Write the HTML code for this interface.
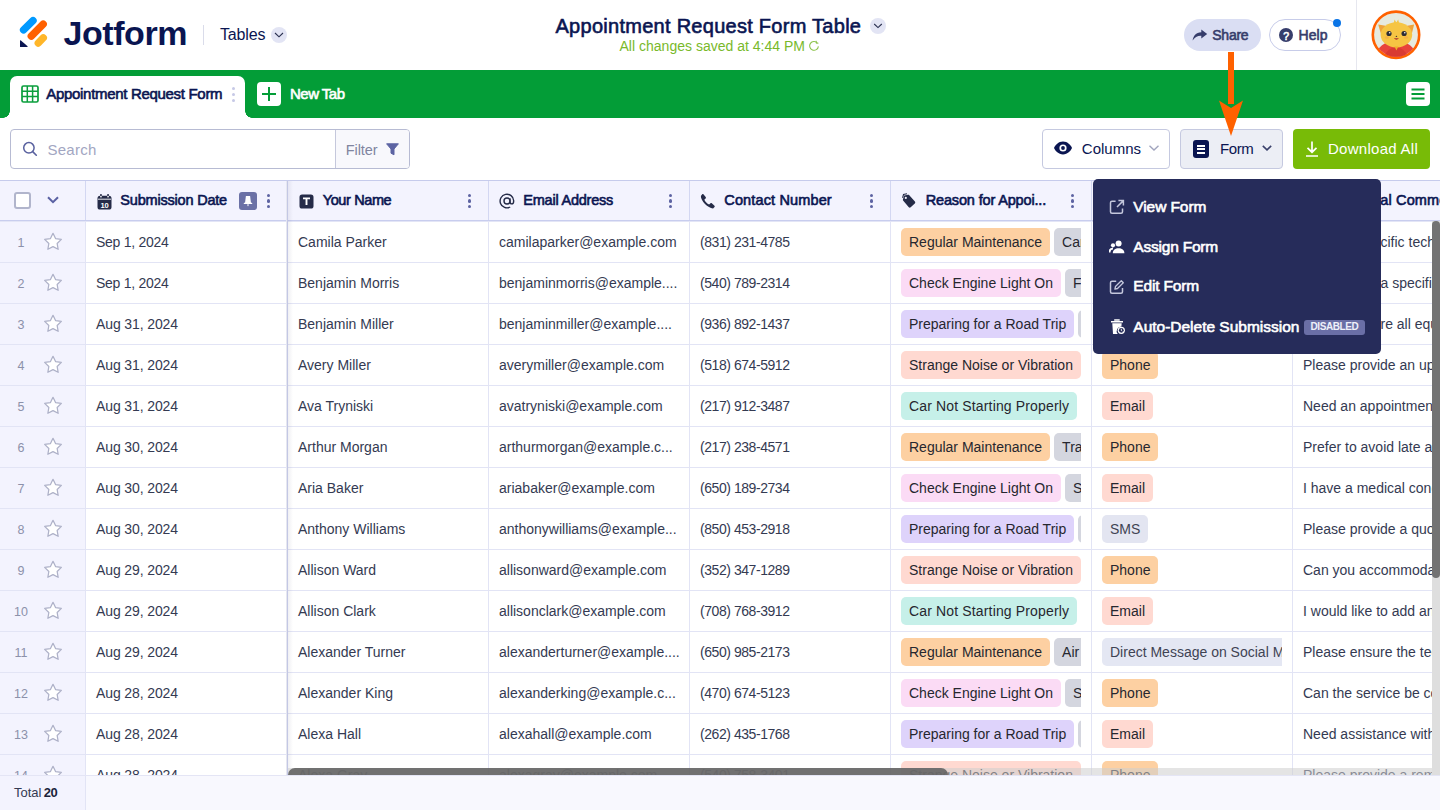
<!DOCTYPE html>
<html><head><meta charset="utf-8"><style>
*{box-sizing:border-box;margin:0;padding:0}
html,body{width:1440px;height:810px;overflow:hidden;background:#fff;font-family:"Liberation Sans",sans-serif;color:#0a1551}
body{position:relative}
.abs{position:absolute}
.t{position:absolute;line-height:0;white-space:nowrap}
.pills{position:absolute;height:28px;overflow:hidden;white-space:nowrap;display:flex;gap:4px}
.pill{display:block;height:28px;line-height:28px;padding:0 8px;border-radius:5px;font-size:14px;color:#26272f;flex:none}
.rm{background:#fdd0a2} .ce{background:#fbdbf5} .pr{background:#ded3fb} .sn{background:#ffd9d1} .cn{background:#c6f0e9} .g{background:#d4d6df}
.ph{background:#fdd0a2} .em{background:#ffd9d1} .sms{background:#e3e5f1;color:#3f4353} .dm{background:#e4e7f3;color:#3f4353}
</style></head><body>
<div class="abs" style="left:0;top:0;width:1440px;height:70px;background:#fff"></div>
<svg class="abs" style="left:0;top:0" width="60" height="60" viewBox="0 0 60 60">
<line x1="23.6" y1="29.8" x2="33.0" y2="20.6" stroke="#0099ff" stroke-width="7.4" stroke-linecap="round"/>
<line x1="31.3" y1="36.2" x2="43.2" y2="24.1" stroke="#ff6100" stroke-width="7.4" stroke-linecap="round"/>
<line x1="38.3" y1="43.0" x2="43.3" y2="37.8" stroke="#ffb629" stroke-width="7.4" stroke-linecap="round"/>
<path d="M20.6 40.2 L27.6 46.2 Q28 47 27 47 H20.6 Q20 47 20 46.4 V40.8 Q20 40 20.6 40.2Z" fill="#0a1551"/>
</svg>
<div class="t" style="left:63.5px;top:33.22px;font-size:34.0px;font-weight:700;color:#0a1551;letter-spacing:-0.427px;">Jotform</div>
<div class="abs" style="left:203px;top:25px;width:1px;height:20px;background:#dadcea"></div>
<div class="t" style="left:220.0px;top:35.36px;font-size:16.0px;font-weight:400;color:#0a1551;letter-spacing:-0.150px;">Tables</div>
<div class="abs" style="left:271px;top:27px;width:16px;height:16px;border-radius:50%;background:#e2e4f4"></div>
<svg class="abs" style="left:274px;top:31px" width="10" height="8" viewBox="0 0 10 8"><path d="M1 2l4 3.8 4-3.8" fill="none" stroke="#2a3050" stroke-width="1.1"/></svg>
<div class="t" style="left:555.5px;top:25.87px;font-size:20.0px;font-weight:400;-webkit-text-stroke:0.6px #0a1551;color:#0a1551;letter-spacing:0.273px;">Appointment Request Form Table</div>
<div class="abs" style="left:869.5px;top:18px;width:16px;height:16px;border-radius:50%;background:#e2e4f4"></div>
<svg class="abs" style="left:872.5px;top:22px" width="10" height="8" viewBox="0 0 10 8"><path d="M1.2 2l3.8 3.6 3.8-3.6" fill="none" stroke="#2a3050" stroke-width="1.1"/></svg>
<div class="t" style="left:619.5px;top:46.05px;font-size:14.0px;font-weight:400;color:#79b92b;letter-spacing:0.010px;">All changes saved at 4:44 PM</div>
<svg class="abs" style="left:807px;top:39px" width="14" height="14" viewBox="0 0 14 14"><path d="M10.3 3.9A4.4 4.4 0 1 0 11.4 7.4" fill="none" stroke="#8cc24a" stroke-width="1.1"/><path d="M9.2 1.8v2.4h2.2" fill="none" stroke="#8cc24a" stroke-width="1"/></svg>
<div class="abs" style="left:1184px;top:19px;width:77px;height:32px;border-radius:16px;background:#dadef3"></div>
<svg class="abs" style="left:1192px;top:29px" width="16" height="12" viewBox="0 0 16 12"><path d="M9.3 0.4L15.2 5 9.3 9.4V6.7C5.3 6.6 2.700 8 0.600 11.600 1.200 7 3.800 3.600 9.300 3.200z" fill="#363d6b"/></svg>
<div class="t" style="left:1212.3px;top:34.75px;font-size:14.0px;font-weight:400;-webkit-text-stroke:0.6px #363d6b;color:#363d6b;letter-spacing:-0.265px;">Share</div>
<div class="abs" style="left:1269px;top:19px;width:72px;height:32px;border-radius:16px;border:1px solid #c7cce9;background:#fff"></div>
<div class="abs" style="left:1278.8px;top:27.8px;width:14.5px;height:14.5px;border-radius:50%;background:#363d6b"></div>
<div class="t" style="left:1283.2px;top:35.56px;font-size:10.5px;font-weight:400;-webkit-text-stroke:0.6px #fff;color:#fff;">?</div>
<div class="t" style="left:1298.5px;top:34.75px;font-size:14.0px;font-weight:400;-webkit-text-stroke:0.6px #363d6b;color:#363d6b;letter-spacing:0.068px;">Help</div>
<div class="abs" style="left:1333px;top:18.8px;width:8px;height:8px;border-radius:50%;background:#0a74e6"></div>
<div class="abs" style="left:1356px;top:0;width:1px;height:70px;background:#e6e7ef"></div>
<svg class="abs" style="left:1370px;top:9px" width="52" height="52" viewBox="0 0 52 52">
<defs><clipPath id="av"><circle cx="26" cy="25.8" r="22"/></clipPath></defs>
<circle cx="26" cy="25.8" r="23.2" fill="#e7eadf" stroke="#ff6100" stroke-width="2.6"/>
<g clip-path="url(#av)">
<path d="M5 52 Q6 33 26 31.5 Q46 33 47 52z" fill="#e8443b"/>
<path d="M14 52 Q14 40 26 38 Q38 40 38 52z" fill="#d93a32"/>
<path d="M8.2 15.6 L17 17 L11 25z" fill="#eea33a"/><path d="M44.1 15.6 L35.8 17 L41.8 25z" fill="#eea33a"/>
<ellipse cx="26.4" cy="25.8" rx="15.8" ry="12.6" fill="#f6c543"/>
<path d="M23.5 15 L24.6 10.6 L26.3 13.6 L28.2 10.6 L29.3 15z" fill="#f6c543"/>
<ellipse cx="17" cy="28.5" rx="2.2" ry="1.2" fill="#f3a94a" opacity=".7"/><ellipse cx="36" cy="28.5" rx="2.2" ry="1.2" fill="#f3a94a" opacity=".7"/>
<circle cx="19" cy="24.5" r="2.6" fill="#2d2d35"/><circle cx="34.1" cy="24.5" r="2.6" fill="#2d2d35"/>
<circle cx="19.7" cy="23.8" r=".8" fill="#fff"/><circle cx="34.8" cy="23.8" r=".8" fill="#fff"/>
<path d="M26.4 26.6l-.9 1.3h1.8z" fill="#333"/>
<path d="M23.8 29.3 Q26.4 32.2 29 29.3z" fill="#a8322c"/>
<path d="M24.5 37.5 L26.4 41.5 L28.3 37.5z" fill="#f0b02a"/>
</g></svg>
<div class="abs" style="left:0;top:70px;width:1440px;height:48px;background:#039d37"></div>
<div class="abs" style="left:10px;top:76px;width:235px;height:42px;background:#fff;border-radius:7px 7px 0 0"></div>
<div class="abs" style="left:3px;top:111px;width:7px;height:7px;background:radial-gradient(circle at 0 0,#039d37 6.5px,#fff 7px)"></div>
<div class="abs" style="left:245px;top:111px;width:7px;height:7px;background:radial-gradient(circle at 100% 0,#039d37 6.5px,#fff 7px)"></div>
<svg class="abs" style="left:21px;top:84.5px" width="18" height="18" viewBox="0 0 18 18"><rect x="1" y="1" width="16" height="16" rx="1.5" fill="none" stroke="#0a9e3c" stroke-width="1.7"/><path d="M1 6.3h16M1 11.6h16M6.3 1v16M11.6 1v16" stroke="#0a9e3c" stroke-width="1.5"/></svg>
<div class="t" style="left:46.3px;top:94.10px;font-size:15.0px;font-weight:400;-webkit-text-stroke:0.6px #0a1551;color:#0a1551;letter-spacing:-0.310px;">Appointment Request Form</div>
<div class="abs" style="left:231.5px;top:86.5px;width:3px;height:3px;border-radius:50%;background:#c6c9e6"></div>
<div class="abs" style="left:231.5px;top:92.5px;width:3px;height:3px;border-radius:50%;background:#c6c9e6"></div>
<div class="abs" style="left:231.5px;top:98.5px;width:3px;height:3px;border-radius:50%;background:#c6c9e6"></div>
<div class="abs" style="left:257px;top:82px;width:24px;height:24px;border-radius:4px;background:#fff"></div>
<svg class="abs" style="left:257px;top:82px" width="24" height="24" viewBox="0 0 24 24"><path d="M12 5v14M5 12h14" stroke="#039d37" stroke-width="2"/></svg>
<div class="t" style="left:290.0px;top:94.10px;font-size:15.0px;font-weight:400;-webkit-text-stroke:0.6px #fff;color:#fff;letter-spacing:-0.516px;">New Tab</div>
<div class="abs" style="left:1406px;top:82px;width:24px;height:24px;border-radius:4px;background:#fff"></div>
<svg class="abs" style="left:1406px;top:82px" width="24" height="24" viewBox="0 0 24 24"><path d="M5.5 7.5h13M5.5 12h13M5.5 16.5h13" stroke="#039d37" stroke-width="2"/></svg>
<div class="abs" style="left:10px;top:129px;width:400px;height:40px;border:1px solid #b7bbd3;border-radius:4px;background:#fff"></div>
<div class="abs" style="left:335px;top:130px;width:74px;height:38px;border-left:1px solid #c5c8dc;background:#f8f8fc;border-radius:0 3px 3px 0"></div>
<svg class="abs" style="left:20px;top:139px" width="20" height="20" viewBox="0 0 20 20"><circle cx="8.9" cy="8.8" r="5.2" fill="none" stroke="#59619f" stroke-width="1.5"/><path d="M12.7 12.6l3.6 3.6" stroke="#59619f" stroke-width="1.6" stroke-linecap="round"/></svg>
<div class="t" style="left:47.4px;top:150.30px;font-size:15.0px;font-weight:400;color:#a2a6c2;letter-spacing:0.294px;">Search</div>
<div class="t" style="left:345.7px;top:150.18px;font-size:14.5px;font-weight:400;color:#80859f;letter-spacing:-0.047px;">Filter</div>
<svg class="abs" style="left:386px;top:143px" width="13" height="13" viewBox="0 0 13 13"><path d="M0.6 0.8h11.8L8 6v5.8L5 10.2V6z" fill="#5d64a3" stroke="#5d64a3" stroke-width="1" stroke-linejoin="round"/></svg>
<div class="abs" style="left:1042px;top:129px;width:128px;height:40px;border:1px solid #c5c9e0;border-radius:4px;background:#fff"></div>
<svg class="abs" style="left:1053px;top:140px" width="20" height="16" viewBox="0 0 20 16"><path d="M10 1.6C5.4 1.6 2.2 5.2 1 8 2.2 10.8 5.4 14.4 10 14.4S17.8 10.8 19 8C17.8 5.2 14.6 1.6 10 1.6z" fill="#0a1551"/><circle cx="10" cy="8" r="3.6" fill="#fff"/><circle cx="10" cy="8" r="1.9" fill="#0a1551"/></svg>
<div class="t" style="left:1081.8px;top:149.40px;font-size:15.0px;font-weight:400;color:#0a1551;">Columns</div>
<svg class="abs" style="left:1148px;top:144px" width="12" height="8" viewBox="0 0 12 8"><path d="M1.5 1.8l4.5 4.2 4.5-4.2" fill="none" stroke="#a1a5be" stroke-width="1.4"/></svg>
<div class="abs" style="left:1180px;top:129px;width:103px;height:40px;border:1px solid #c5c9e0;border-radius:4px;background:#eceef5"></div>
<div class="abs" style="left:1193px;top:140px;width:15.5px;height:18px;border-radius:3px;background:#0a1551"></div>
<div class="abs" style="left:1197px;top:144.5px;width:7.5px;height:2px;background:#fff"></div>
<div class="abs" style="left:1197px;top:148px;width:7.5px;height:2px;background:#fff"></div>
<div class="abs" style="left:1197px;top:151.5px;width:7.5px;height:2px;background:#fff"></div>
<div class="t" style="left:1220.0px;top:149.40px;font-size:15.0px;font-weight:400;color:#0a1551;letter-spacing:-0.400px;">Form</div>
<svg class="abs" style="left:1261px;top:144px" width="12" height="8" viewBox="0 0 12 8"><path d="M1.8 1.8l4.2 4 4.2-4" fill="none" stroke="#3a416b" stroke-width="1.6"/></svg>
<div class="abs" style="left:1293px;top:129px;width:137px;height:40px;border-radius:4px;background:#78bb07"></div>
<svg class="abs" style="left:1304px;top:140px" width="16" height="18" viewBox="0 0 16 18"><path d="M8 1.5v10.5M3.5 7.8L8 12.2l4.5-4.4M2 16h12" fill="none" stroke="#fff" stroke-width="1.7"/></svg>
<div class="t" style="left:1328.0px;top:149.40px;font-size:15.0px;font-weight:400;color:#fff;letter-spacing:0.280px;">Download All</div>
<div class="abs" style="left:0;top:180px;width:1440px;height:1px;background:#c6cbec"></div>
<div class="abs" style="left:0;top:181px;width:1440px;height:39px;background:#f3f3fe"></div>
<div class="abs" style="left:0;top:220px;width:1440px;height:1px;background:#c8cdee"></div>
<div class="abs" style="left:0;top:221px;width:1440px;height:1px;background:#e3e5f6"></div>
<div class="abs" style="left:0;top:222px;width:85px;height:553px;background:#f3f3fe"></div>
<div class="abs" style="left:0;top:262px;width:1440px;height:1px;background:#e2e4f5"></div>
<div class="abs" style="left:0;top:303px;width:1440px;height:1px;background:#e2e4f5"></div>
<div class="abs" style="left:0;top:344px;width:1440px;height:1px;background:#e2e4f5"></div>
<div class="abs" style="left:0;top:385px;width:1440px;height:1px;background:#e2e4f5"></div>
<div class="abs" style="left:0;top:426px;width:1440px;height:1px;background:#e2e4f5"></div>
<div class="abs" style="left:0;top:467px;width:1440px;height:1px;background:#e2e4f5"></div>
<div class="abs" style="left:0;top:508px;width:1440px;height:1px;background:#e2e4f5"></div>
<div class="abs" style="left:0;top:549px;width:1440px;height:1px;background:#e2e4f5"></div>
<div class="abs" style="left:0;top:590px;width:1440px;height:1px;background:#e2e4f5"></div>
<div class="abs" style="left:0;top:631px;width:1440px;height:1px;background:#e2e4f5"></div>
<div class="abs" style="left:0;top:672px;width:1440px;height:1px;background:#e2e4f5"></div>
<div class="abs" style="left:0;top:713px;width:1440px;height:1px;background:#e2e4f5"></div>
<div class="abs" style="left:0;top:754px;width:1440px;height:1px;background:#e2e4f5"></div>
<div class="abs" style="left:85px;top:181px;width:1px;height:39px;background:#d3d7f2"></div>
<div class="abs" style="left:85px;top:222px;width:1px;height:553px;background:#e2e4f5"></div>
<div class="abs" style="left:488px;top:181px;width:1px;height:39px;background:#d3d7f2"></div>
<div class="abs" style="left:488px;top:222px;width:1px;height:553px;background:#e2e4f5"></div>
<div class="abs" style="left:689px;top:181px;width:1px;height:39px;background:#d3d7f2"></div>
<div class="abs" style="left:689px;top:222px;width:1px;height:553px;background:#e2e4f5"></div>
<div class="abs" style="left:890px;top:181px;width:1px;height:39px;background:#d3d7f2"></div>
<div class="abs" style="left:890px;top:222px;width:1px;height:553px;background:#e2e4f5"></div>
<div class="abs" style="left:1091px;top:181px;width:1px;height:39px;background:#d3d7f2"></div>
<div class="abs" style="left:1091px;top:222px;width:1px;height:553px;background:#e2e4f5"></div>
<div class="abs" style="left:1292px;top:181px;width:1px;height:39px;background:#d3d7f2"></div>
<div class="abs" style="left:1292px;top:222px;width:1px;height:553px;background:#e2e4f5"></div>
<div class="abs" style="left:286px;top:181px;width:1px;height:629px;background:#e6e7f0"></div>
<div class="abs" style="left:287px;top:181px;width:1px;height:629px;background:#c3c7e4"></div>
<div class="abs" style="left:288px;top:181px;width:5px;height:629px;background:linear-gradient(90deg,rgba(40,40,90,.07),rgba(40,40,90,0))"></div>
<div class="abs" style="left:14px;top:192px;width:17px;height:17px;border:2px solid #b1b5cc;border-radius:3px;background:#fff"></div>
<svg class="abs" style="left:46px;top:195px" width="14" height="10" viewBox="0 0 14 10"><path d="M2 2.2l5 5 5-5" fill="none" stroke="#5a61a3" stroke-width="2"/></svg>
<svg class="abs" style="left:96.5px;top:193.5px" width="15" height="16" viewBox="0 0 15 16"><rect x="0.5" y="1.8" width="14" height="13.8" rx="2.6" fill="#252b48"/><rect x="3" y="0" width="1.9" height="3.6" rx=".9" fill="#252b48"/><rect x="10.1" y="0" width="1.9" height="3.6" rx=".9" fill="#252b48"/><rect x="3.2" y="1.8" width="1.5" height="1.6" fill="#fff"/><rect x="10.3" y="1.8" width="1.5" height="1.6" fill="#fff"/><path d="M1 5.2h13" stroke="#fff" stroke-width=".9"/><text x="7.5" y="13.6" font-size="7.6" font-weight="bold" fill="#fff" text-anchor="middle" font-family="Liberation Sans" letter-spacing="-.3">10</text></svg>
<div class="t" style="left:120.3px;top:200.28px;font-size:14.5px;font-weight:400;-webkit-text-stroke:0.6px #0a1551;color:#0a1551;letter-spacing:-0.194px;">Submission Date</div>
<div class="abs" style="left:239px;top:192px;width:18px;height:18px;border-radius:3px;background:#6b71a6"></div>
<svg class="abs" style="left:239px;top:192px" width="18" height="18" viewBox="0 0 18 18"><path d="M6.9 4H11.1L11.9 10.6L13.2 11.1V12.1H4.8V11.1L6.1 10.6Z" fill="#fff"/><rect x="8.3" y="12.1" width="1.4" height="2" fill="#fff" opacity=".75"/></svg>
<div class="abs" style="left:267px;top:194.3px;width:3.2px;height:3.2px;border-radius:50%;background:#5d63a2"></div><div class="abs" style="left:267px;top:199.4px;width:3.2px;height:3.2px;border-radius:50%;background:#5d63a2"></div><div class="abs" style="left:267px;top:204.5px;width:3.2px;height:3.2px;border-radius:50%;background:#5d63a2"></div>
<svg class="abs" style="left:298.5px;top:194px" width="15" height="15" viewBox="0 0 15 15"><rect x="0.5" y="0.5" width="14" height="14" rx="2.6" fill="#252b48"/><path d="M4 4.4h7M7.5 4.4v6.6" stroke="#fff" stroke-width="1.9"/></svg>
<div class="t" style="left:322.7px;top:200.28px;font-size:14.5px;font-weight:400;-webkit-text-stroke:0.6px #0a1551;color:#0a1551;letter-spacing:-0.377px;">Your Name</div>
<div class="abs" style="left:468px;top:194.3px;width:3.2px;height:3.2px;border-radius:50%;background:#5d63a2"></div><div class="abs" style="left:468px;top:199.4px;width:3.2px;height:3.2px;border-radius:50%;background:#5d63a2"></div><div class="abs" style="left:468px;top:204.5px;width:3.2px;height:3.2px;border-radius:50%;background:#5d63a2"></div>
<svg class="abs" style="left:499px;top:193px" width="16" height="16" viewBox="0 0 16 16"><circle cx="8" cy="8" r="3" fill="none" stroke="#252b48" stroke-width="1.4"/><path d="M11 5.2v3.6c0 1.3.7 2.1 1.7 2.1s2-.9 2-3.2A6.8 6.8 0 1 0 11.2 14" fill="none" stroke="#252b48" stroke-width="1.4"/></svg>
<div class="t" style="left:523.3px;top:200.28px;font-size:14.5px;font-weight:400;-webkit-text-stroke:0.6px #0a1551;color:#0a1551;letter-spacing:-0.224px;">Email Address</div>
<div class="abs" style="left:669px;top:194.3px;width:3.2px;height:3.2px;border-radius:50%;background:#5d63a2"></div><div class="abs" style="left:669px;top:199.4px;width:3.2px;height:3.2px;border-radius:50%;background:#5d63a2"></div><div class="abs" style="left:669px;top:204.5px;width:3.2px;height:3.2px;border-radius:50%;background:#5d63a2"></div>
<svg class="abs" style="left:700px;top:193px" width="16" height="16" viewBox="0 0 16 16"><path d="M3.4 1.2l2.300 2.800c.4.5.3 1.1-.1 1.500L4.300 6.700c1 2 2.700 3.800 4.800 4.900l1.200-1.200c.4-.4 1.100-.5 1.500-.1l2.700 2.400c.4.4.4 1 0 1.400l-1.400 1.300C8.500 15.600 .4 7.600 .9 3L2.200 1.300c.3-.4.8-.4 1.200-.1z" fill="#252b48"/></svg>
<div class="t" style="left:724.3px;top:200.28px;font-size:14.5px;font-weight:400;-webkit-text-stroke:0.6px #0a1551;color:#0a1551;letter-spacing:0.140px;">Contact Number</div>
<div class="abs" style="left:870px;top:194.3px;width:3.2px;height:3.2px;border-radius:50%;background:#5d63a2"></div><div class="abs" style="left:870px;top:199.4px;width:3.2px;height:3.2px;border-radius:50%;background:#5d63a2"></div><div class="abs" style="left:870px;top:204.5px;width:3.2px;height:3.2px;border-radius:50%;background:#5d63a2"></div>
<svg class="abs" style="left:901px;top:193px" width="16" height="16" viewBox="0 0 16 16"><path d="M3.200 2.600L7 1.800c.5-.1 1 .1 1.300.4l5.600 6.300c.5.6.5 1.400-.1 1.900l-4.100 3.900c-.6.5-1.400.5-1.900-.1L2.300 7.800c-.3-.4-.5-.9-.4-1.400z" fill="#252b48"/><path d="M1.600 4.800L2.500 1.500 6 .8" fill="none" stroke="#252b48" stroke-width="1.1"/><circle cx="4.800" cy="4.900" r="1.100" fill="#f3f3fe"/></svg>
<div class="t" style="left:925.7px;top:200.28px;font-size:14.5px;font-weight:400;-webkit-text-stroke:0.6px #0a1551;color:#0a1551;letter-spacing:-0.152px;">Reason for Appoi...</div>
<div class="abs" style="left:1071px;top:194.3px;width:3.2px;height:3.2px;border-radius:50%;background:#5d63a2"></div><div class="abs" style="left:1071px;top:199.4px;width:3.2px;height:3.2px;border-radius:50%;background:#5d63a2"></div><div class="abs" style="left:1071px;top:204.5px;width:3.2px;height:3.2px;border-radius:50%;background:#5d63a2"></div>
<svg class="abs" style="left:1303px;top:194px" width="15" height="15" viewBox="0 0 15 15"><rect x="0.5" y="0.5" width="14" height="14" rx="2.6" fill="#252b48"/><path d="M3.5 4.5h8M3.5 7.5h8M3.5 10.5h5" stroke="#fff" stroke-width="1.5"/></svg>
<div class="t" style="left:1327.0px;top:200.28px;font-size:14.5px;font-weight:400;-webkit-text-stroke:0.6px #0a1551;color:#0a1551;letter-spacing:0.121px;">Additional Comments</div>
<div id="body" class="abs" style="left:0;top:222px;width:1432px;height:553px;overflow:hidden">
<div class="t" style="left:0.0px;top:20.87px;font-size:12.5px;font-weight:400;color:#8c91aa;width:42px;text-align:center">1</div>
<svg class="abs" style="left:43px;top:10px" width="20" height="19" viewBox="0 0 20 19"><path d="M10 1.3l2.550 5.300 5.800.8-4.200 4.100 1 5.800L10 14.600l-5.150 2.700 1-5.800L1.650 7.400l5.800-.8z" fill="#fff" stroke="#aeb1c8" stroke-width="1.25" stroke-linejoin="round"/></svg>
<div class="t" style="left:96.0px;top:20.35px;font-size:14.0px;font-weight:400;color:#343a52;letter-spacing:-0.264px;">Sep 1, 2024</div>
<div class="t" style="left:298.0px;top:20.35px;font-size:14.0px;font-weight:400;color:#343a52;">Camila Parker</div>
<div class="t" style="left:499.0px;top:20.35px;font-size:14.0px;font-weight:400;color:#343a52;">camilaparker@example.com</div>
<div class="t" style="left:700.0px;top:20.35px;font-size:14.0px;font-weight:400;color:#343a52;letter-spacing:-0.442px;">(831) 231-4785</div>
<div class="pills" style="left:901px;top:6px;width:180px"><span class="pill rm">Regular Maintenance</span><span class="pill g">Car</span></div>
<div class="t" style="left:1380.5px;top:20.35px;font-size:14.0px;font-weight:400;color:#343a52;">cific technician</div>
<div class="t" style="left:0.0px;top:61.87px;font-size:12.5px;font-weight:400;color:#8c91aa;width:42px;text-align:center">2</div>
<svg class="abs" style="left:43px;top:51px" width="20" height="19" viewBox="0 0 20 19"><path d="M10 1.3l2.550 5.300 5.800.8-4.200 4.100 1 5.800L10 14.600l-5.150 2.700 1-5.800L1.650 7.400l5.800-.8z" fill="#fff" stroke="#aeb1c8" stroke-width="1.25" stroke-linejoin="round"/></svg>
<div class="t" style="left:96.0px;top:61.35px;font-size:14.0px;font-weight:400;color:#343a52;letter-spacing:-0.264px;">Sep 1, 2024</div>
<div class="t" style="left:298.0px;top:61.35px;font-size:14.0px;font-weight:400;color:#343a52;">Benjamin Morris</div>
<div class="t" style="left:499.0px;top:61.35px;font-size:14.0px;font-weight:400;color:#343a52;">benjaminmorris@example....</div>
<div class="t" style="left:700.0px;top:61.35px;font-size:14.0px;font-weight:400;color:#343a52;letter-spacing:-0.442px;">(540) 789-2314</div>
<div class="pills" style="left:901px;top:47px;width:180px"><span class="pill ce">Check Engine Light On</span><span class="pill g">Flat</span></div>
<div class="t" style="left:1380.5px;top:61.35px;font-size:14.0px;font-weight:400;color:#343a52;">a specific</div>
<div class="t" style="left:0.0px;top:102.87px;font-size:12.5px;font-weight:400;color:#8c91aa;width:42px;text-align:center">3</div>
<svg class="abs" style="left:43px;top:92px" width="20" height="19" viewBox="0 0 20 19"><path d="M10 1.3l2.550 5.300 5.800.8-4.200 4.100 1 5.800L10 14.600l-5.150 2.700 1-5.800L1.650 7.400l5.800-.8z" fill="#fff" stroke="#aeb1c8" stroke-width="1.25" stroke-linejoin="round"/></svg>
<div class="t" style="left:96.0px;top:102.35px;font-size:14.0px;font-weight:400;color:#343a52;letter-spacing:-0.114px;">Aug 31, 2024</div>
<div class="t" style="left:298.0px;top:102.35px;font-size:14.0px;font-weight:400;color:#343a52;">Benjamin Miller</div>
<div class="t" style="left:499.0px;top:102.35px;font-size:14.0px;font-weight:400;color:#343a52;">benjaminmiller@example....</div>
<div class="t" style="left:700.0px;top:102.35px;font-size:14.0px;font-weight:400;color:#343a52;letter-spacing:-0.442px;">(936) 892-1437</div>
<div class="pills" style="left:901px;top:88px;width:180px"><span class="pill pr">Preparing for a Road Trip</span><span class="pill g">Oil</span></div>
<div class="t" style="left:1380.5px;top:102.35px;font-size:14.0px;font-weight:400;color:#343a52;">re all equipment</div>
<div class="t" style="left:0.0px;top:143.87px;font-size:12.5px;font-weight:400;color:#8c91aa;width:42px;text-align:center">4</div>
<svg class="abs" style="left:43px;top:133px" width="20" height="19" viewBox="0 0 20 19"><path d="M10 1.3l2.550 5.300 5.800.8-4.200 4.100 1 5.800L10 14.600l-5.150 2.700 1-5.800L1.650 7.400l5.800-.8z" fill="#fff" stroke="#aeb1c8" stroke-width="1.25" stroke-linejoin="round"/></svg>
<div class="t" style="left:96.0px;top:143.35px;font-size:14.0px;font-weight:400;color:#343a52;letter-spacing:-0.114px;">Aug 31, 2024</div>
<div class="t" style="left:298.0px;top:143.35px;font-size:14.0px;font-weight:400;color:#343a52;">Avery Miller</div>
<div class="t" style="left:499.0px;top:143.35px;font-size:14.0px;font-weight:400;color:#343a52;">averymiller@example.com</div>
<div class="t" style="left:700.0px;top:143.35px;font-size:14.0px;font-weight:400;color:#343a52;letter-spacing:-0.442px;">(518) 674-5912</div>
<div class="pills" style="left:901px;top:129px;width:180px"><span class="pill sn">Strange Noise or Vibration</span></div>
<div class="pills" style="left:1102px;top:129px;width:180px"><span class="pill ph">Phone</span></div>
<div class="t" style="left:1303.0px;top:143.35px;font-size:14.0px;font-weight:400;color:#343a52;">Please provide an update</div>
<div class="t" style="left:0.0px;top:184.87px;font-size:12.5px;font-weight:400;color:#8c91aa;width:42px;text-align:center">5</div>
<svg class="abs" style="left:43px;top:174px" width="20" height="19" viewBox="0 0 20 19"><path d="M10 1.3l2.550 5.300 5.800.8-4.200 4.100 1 5.800L10 14.600l-5.150 2.700 1-5.800L1.650 7.400l5.800-.8z" fill="#fff" stroke="#aeb1c8" stroke-width="1.25" stroke-linejoin="round"/></svg>
<div class="t" style="left:96.0px;top:184.35px;font-size:14.0px;font-weight:400;color:#343a52;letter-spacing:-0.114px;">Aug 31, 2024</div>
<div class="t" style="left:298.0px;top:184.35px;font-size:14.0px;font-weight:400;color:#343a52;">Ava Tryniski</div>
<div class="t" style="left:499.0px;top:184.35px;font-size:14.0px;font-weight:400;color:#343a52;">avatryniski@example.com</div>
<div class="t" style="left:700.0px;top:184.35px;font-size:14.0px;font-weight:400;color:#343a52;letter-spacing:-0.442px;">(217) 912-3487</div>
<div class="pills" style="left:901px;top:170px;width:180px"><span class="pill cn" style="letter-spacing:.15px">Car Not Starting Properly</span></div>
<div class="pills" style="left:1102px;top:170px;width:180px"><span class="pill em">Email</span></div>
<div class="t" style="left:1303.0px;top:184.35px;font-size:14.0px;font-weight:400;color:#343a52;">Need an appointment</div>
<div class="t" style="left:0.0px;top:225.87px;font-size:12.5px;font-weight:400;color:#8c91aa;width:42px;text-align:center">6</div>
<svg class="abs" style="left:43px;top:215px" width="20" height="19" viewBox="0 0 20 19"><path d="M10 1.3l2.550 5.300 5.800.8-4.200 4.100 1 5.800L10 14.600l-5.150 2.700 1-5.800L1.650 7.400l5.800-.8z" fill="#fff" stroke="#aeb1c8" stroke-width="1.25" stroke-linejoin="round"/></svg>
<div class="t" style="left:96.0px;top:225.35px;font-size:14.0px;font-weight:400;color:#343a52;letter-spacing:-0.114px;">Aug 30, 2024</div>
<div class="t" style="left:298.0px;top:225.35px;font-size:14.0px;font-weight:400;color:#343a52;">Arthur Morgan</div>
<div class="t" style="left:499.0px;top:225.35px;font-size:14.0px;font-weight:400;color:#343a52;">arthurmorgan@example.c...</div>
<div class="t" style="left:700.0px;top:225.35px;font-size:14.0px;font-weight:400;color:#343a52;letter-spacing:-0.442px;">(217) 238-4571</div>
<div class="pills" style="left:901px;top:211px;width:180px"><span class="pill rm">Regular Maintenance</span><span class="pill g">Tran</span></div>
<div class="pills" style="left:1102px;top:211px;width:180px"><span class="pill ph">Phone</span></div>
<div class="t" style="left:1303.0px;top:225.35px;font-size:14.0px;font-weight:400;color:#343a52;">Prefer to avoid late afternoon</div>
<div class="t" style="left:0.0px;top:266.87px;font-size:12.5px;font-weight:400;color:#8c91aa;width:42px;text-align:center">7</div>
<svg class="abs" style="left:43px;top:256px" width="20" height="19" viewBox="0 0 20 19"><path d="M10 1.3l2.550 5.300 5.800.8-4.200 4.100 1 5.800L10 14.600l-5.150 2.700 1-5.800L1.650 7.400l5.800-.8z" fill="#fff" stroke="#aeb1c8" stroke-width="1.25" stroke-linejoin="round"/></svg>
<div class="t" style="left:96.0px;top:266.35px;font-size:14.0px;font-weight:400;color:#343a52;letter-spacing:-0.114px;">Aug 30, 2024</div>
<div class="t" style="left:298.0px;top:266.35px;font-size:14.0px;font-weight:400;color:#343a52;">Aria Baker</div>
<div class="t" style="left:499.0px;top:266.35px;font-size:14.0px;font-weight:400;color:#343a52;">ariabaker@example.com</div>
<div class="t" style="left:700.0px;top:266.35px;font-size:14.0px;font-weight:400;color:#343a52;letter-spacing:-0.442px;">(650) 189-2734</div>
<div class="pills" style="left:901px;top:252px;width:180px"><span class="pill ce">Check Engine Light On</span><span class="pill g">Susp</span></div>
<div class="pills" style="left:1102px;top:252px;width:180px"><span class="pill em">Email</span></div>
<div class="t" style="left:1303.0px;top:266.35px;font-size:14.0px;font-weight:400;color:#343a52;">I have a medical condition</div>
<div class="t" style="left:0.0px;top:307.87px;font-size:12.5px;font-weight:400;color:#8c91aa;width:42px;text-align:center">8</div>
<svg class="abs" style="left:43px;top:297px" width="20" height="19" viewBox="0 0 20 19"><path d="M10 1.3l2.550 5.300 5.800.8-4.200 4.100 1 5.800L10 14.600l-5.150 2.700 1-5.800L1.650 7.400l5.800-.8z" fill="#fff" stroke="#aeb1c8" stroke-width="1.25" stroke-linejoin="round"/></svg>
<div class="t" style="left:96.0px;top:307.35px;font-size:14.0px;font-weight:400;color:#343a52;letter-spacing:-0.114px;">Aug 30, 2024</div>
<div class="t" style="left:298.0px;top:307.35px;font-size:14.0px;font-weight:400;color:#343a52;">Anthony Williams</div>
<div class="t" style="left:499.0px;top:307.35px;font-size:14.0px;font-weight:400;color:#343a52;">anthonywilliams@example...</div>
<div class="t" style="left:700.0px;top:307.35px;font-size:14.0px;font-weight:400;color:#343a52;letter-spacing:-0.442px;">(850) 453-2918</div>
<div class="pills" style="left:901px;top:293px;width:180px"><span class="pill pr">Preparing for a Road Trip</span><span class="pill g">Oil</span></div>
<div class="pills" style="left:1102px;top:293px;width:180px"><span class="pill sms">SMS</span></div>
<div class="t" style="left:1303.0px;top:307.35px;font-size:14.0px;font-weight:400;color:#343a52;">Please provide a quote</div>
<div class="t" style="left:0.0px;top:348.87px;font-size:12.5px;font-weight:400;color:#8c91aa;width:42px;text-align:center">9</div>
<svg class="abs" style="left:43px;top:338px" width="20" height="19" viewBox="0 0 20 19"><path d="M10 1.3l2.550 5.300 5.800.8-4.200 4.100 1 5.800L10 14.600l-5.150 2.700 1-5.800L1.650 7.400l5.800-.8z" fill="#fff" stroke="#aeb1c8" stroke-width="1.25" stroke-linejoin="round"/></svg>
<div class="t" style="left:96.0px;top:348.35px;font-size:14.0px;font-weight:400;color:#343a52;letter-spacing:-0.114px;">Aug 29, 2024</div>
<div class="t" style="left:298.0px;top:348.35px;font-size:14.0px;font-weight:400;color:#343a52;">Allison Ward</div>
<div class="t" style="left:499.0px;top:348.35px;font-size:14.0px;font-weight:400;color:#343a52;">allisonward@example.com</div>
<div class="t" style="left:700.0px;top:348.35px;font-size:14.0px;font-weight:400;color:#343a52;letter-spacing:-0.442px;">(352) 347-1289</div>
<div class="pills" style="left:901px;top:334px;width:180px"><span class="pill sn">Strange Noise or Vibration</span></div>
<div class="pills" style="left:1102px;top:334px;width:180px"><span class="pill ph">Phone</span></div>
<div class="t" style="left:1303.0px;top:348.35px;font-size:14.0px;font-weight:400;color:#343a52;">Can you accommodate</div>
<div class="t" style="left:0.0px;top:389.87px;font-size:12.5px;font-weight:400;color:#8c91aa;width:42px;text-align:center">10</div>
<svg class="abs" style="left:43px;top:379px" width="20" height="19" viewBox="0 0 20 19"><path d="M10 1.3l2.550 5.300 5.800.8-4.200 4.100 1 5.800L10 14.600l-5.150 2.700 1-5.800L1.650 7.400l5.800-.8z" fill="#fff" stroke="#aeb1c8" stroke-width="1.25" stroke-linejoin="round"/></svg>
<div class="t" style="left:96.0px;top:389.35px;font-size:14.0px;font-weight:400;color:#343a52;letter-spacing:-0.114px;">Aug 29, 2024</div>
<div class="t" style="left:298.0px;top:389.35px;font-size:14.0px;font-weight:400;color:#343a52;">Allison Clark</div>
<div class="t" style="left:499.0px;top:389.35px;font-size:14.0px;font-weight:400;color:#343a52;">allisonclark@example.com</div>
<div class="t" style="left:700.0px;top:389.35px;font-size:14.0px;font-weight:400;color:#343a52;letter-spacing:-0.442px;">(708) 768-3912</div>
<div class="pills" style="left:901px;top:375px;width:180px"><span class="pill cn" style="letter-spacing:.15px">Car Not Starting Properly</span></div>
<div class="pills" style="left:1102px;top:375px;width:180px"><span class="pill em">Email</span></div>
<div class="t" style="left:1303.0px;top:389.35px;font-size:14.0px;font-weight:400;color:#343a52;">I would like to add an</div>
<div class="t" style="left:0.0px;top:430.87px;font-size:12.5px;font-weight:400;color:#8c91aa;width:42px;text-align:center">11</div>
<svg class="abs" style="left:43px;top:420px" width="20" height="19" viewBox="0 0 20 19"><path d="M10 1.3l2.550 5.300 5.800.8-4.200 4.100 1 5.800L10 14.600l-5.150 2.700 1-5.800L1.650 7.400l5.800-.8z" fill="#fff" stroke="#aeb1c8" stroke-width="1.25" stroke-linejoin="round"/></svg>
<div class="t" style="left:96.0px;top:430.35px;font-size:14.0px;font-weight:400;color:#343a52;letter-spacing:-0.114px;">Aug 29, 2024</div>
<div class="t" style="left:298.0px;top:430.35px;font-size:14.0px;font-weight:400;color:#343a52;">Alexander Turner</div>
<div class="t" style="left:499.0px;top:430.35px;font-size:14.0px;font-weight:400;color:#343a52;">alexanderturner@example....</div>
<div class="t" style="left:700.0px;top:430.35px;font-size:14.0px;font-weight:400;color:#343a52;letter-spacing:-0.442px;">(650) 985-2173</div>
<div class="pills" style="left:901px;top:416px;width:180px"><span class="pill rm">Regular Maintenance</span><span class="pill g">Air</span></div>
<div class="pills" style="left:1102px;top:416px;width:180px"><span class="pill dm">Direct Message on Social Media</span></div>
<div class="t" style="left:1303.0px;top:430.35px;font-size:14.0px;font-weight:400;color:#343a52;">Please ensure the technician</div>
<div class="t" style="left:0.0px;top:471.87px;font-size:12.5px;font-weight:400;color:#8c91aa;width:42px;text-align:center">12</div>
<svg class="abs" style="left:43px;top:461px" width="20" height="19" viewBox="0 0 20 19"><path d="M10 1.3l2.550 5.300 5.800.8-4.200 4.100 1 5.800L10 14.600l-5.150 2.700 1-5.800L1.650 7.400l5.800-.8z" fill="#fff" stroke="#aeb1c8" stroke-width="1.25" stroke-linejoin="round"/></svg>
<div class="t" style="left:96.0px;top:471.35px;font-size:14.0px;font-weight:400;color:#343a52;letter-spacing:-0.114px;">Aug 28, 2024</div>
<div class="t" style="left:298.0px;top:471.35px;font-size:14.0px;font-weight:400;color:#343a52;">Alexander King</div>
<div class="t" style="left:499.0px;top:471.35px;font-size:14.0px;font-weight:400;color:#343a52;">alexanderking@example.c...</div>
<div class="t" style="left:700.0px;top:471.35px;font-size:14.0px;font-weight:400;color:#343a52;letter-spacing:-0.442px;">(470) 674-5123</div>
<div class="pills" style="left:901px;top:457px;width:180px"><span class="pill ce">Check Engine Light On</span><span class="pill g">Susp</span></div>
<div class="pills" style="left:1102px;top:457px;width:180px"><span class="pill ph">Phone</span></div>
<div class="t" style="left:1303.0px;top:471.35px;font-size:14.0px;font-weight:400;color:#343a52;">Can the service be completed</div>
<div class="t" style="left:0.0px;top:512.87px;font-size:12.5px;font-weight:400;color:#8c91aa;width:42px;text-align:center">13</div>
<svg class="abs" style="left:43px;top:502px" width="20" height="19" viewBox="0 0 20 19"><path d="M10 1.3l2.550 5.300 5.800.8-4.200 4.100 1 5.800L10 14.600l-5.150 2.700 1-5.800L1.650 7.400l5.800-.8z" fill="#fff" stroke="#aeb1c8" stroke-width="1.25" stroke-linejoin="round"/></svg>
<div class="t" style="left:96.0px;top:512.35px;font-size:14.0px;font-weight:400;color:#343a52;letter-spacing:-0.114px;">Aug 28, 2024</div>
<div class="t" style="left:298.0px;top:512.35px;font-size:14.0px;font-weight:400;color:#343a52;">Alexa Hall</div>
<div class="t" style="left:499.0px;top:512.35px;font-size:14.0px;font-weight:400;color:#343a52;">alexahall@example.com</div>
<div class="t" style="left:700.0px;top:512.35px;font-size:14.0px;font-weight:400;color:#343a52;letter-spacing:-0.442px;">(262) 435-1768</div>
<div class="pills" style="left:901px;top:498px;width:180px"><span class="pill pr">Preparing for a Road Trip</span><span class="pill g">Oil</span></div>
<div class="pills" style="left:1102px;top:498px;width:180px"><span class="pill em">Email</span></div>
<div class="t" style="left:1303.0px;top:512.35px;font-size:14.0px;font-weight:400;color:#343a52;">Need assistance with</div>
<div class="t" style="left:0.0px;top:553.87px;font-size:12.5px;font-weight:400;color:#8c91aa;width:42px;text-align:center">14</div>
<svg class="abs" style="left:43px;top:543px" width="20" height="19" viewBox="0 0 20 19"><path d="M10 1.3l2.550 5.300 5.800.8-4.200 4.100 1 5.800L10 14.600l-5.150 2.700 1-5.800L1.650 7.400l5.800-.8z" fill="#fff" stroke="#aeb1c8" stroke-width="1.25" stroke-linejoin="round"/></svg>
<div class="t" style="left:96.0px;top:553.35px;font-size:14.0px;font-weight:400;color:#343a52;letter-spacing:-0.114px;">Aug 28, 2024</div>
<div class="t" style="left:298.0px;top:553.35px;font-size:14.0px;font-weight:400;color:#343a52;">Alexa Gray</div>
<div class="t" style="left:499.0px;top:553.35px;font-size:14.0px;font-weight:400;color:#343a52;">alexagray@example.com</div>
<div class="t" style="left:700.0px;top:553.35px;font-size:14.0px;font-weight:400;color:#343a52;letter-spacing:-0.442px;">(540) 758-3401</div>
<div class="pills" style="left:901px;top:539px;width:180px"><span class="pill sn">Strange Noise or Vibration</span></div>
<div class="pills" style="left:1102px;top:539px;width:180px"><span class="pill ph">Phone</span></div>
<div class="t" style="left:1303.0px;top:553.35px;font-size:14.0px;font-weight:400;color:#343a52;">Please provide a reminder</div>
</div>
<div class="abs" style="left:0;top:775px;width:1440px;height:35px;background:#f8f8fe"></div>
<div class="abs" style="left:0;top:775px;width:1440px;height:1px;background:#e4e5f5"></div>
<div class="abs" style="left:0;top:776px;width:85px;height:34px;background:#f3f3fe"></div>
<div class="abs" style="left:85px;top:776px;width:1px;height:34px;background:#e2e4f5"></div>
<div class="t" style="left:14.0px;top:792.80px;font-size:13.0px;font-weight:400;color:#343a52;letter-spacing:0.008px;">Total</div>
<div class="t" style="left:43.8px;top:792.80px;font-size:13.0px;font-weight:700;color:#1b1f3b;letter-spacing:-0.469px;">20</div>
<div class="abs" style="left:288px;top:768px;width:1144px;height:7px;background:rgba(205,205,205,0.55)"></div>
<div class="abs" style="left:288px;top:768px;width:660px;height:7px;overflow:hidden"><div style="width:660px;height:14px;border-radius:7px;background:rgba(100,100,100,0.9)"></div></div>
<div class="abs" style="left:1432px;top:221px;width:8px;height:554px;background:#dedede"></div>
<div class="abs" style="left:1432px;top:221px;width:8px;height:357px;border-radius:4px;background:#737373"></div>
<div class="abs" style="left:1093px;top:179px;width:288px;height:175px;background:#262c5a;border-radius:5px"></div>
<svg class="abs" style="left:1109px;top:199px" width="16" height="16" viewBox="0 0 16 16"><path d="M6.600 2.300H3c-.9 0-1.500.6-1.500 1.500v9c0 .9.6 1.500 1.500 1.500h9c.9 0 1.500-.6 1.500-1.500V9.400" fill="none" stroke="#c4c7dc" stroke-width="1.5"/><path d="M9.400 1.600h5v5M14.400 1.600L8 8" fill="none" stroke="#c4c7dc" stroke-width="1.5"/></svg>
<div class="t" style="left:1133.3px;top:206.83px;font-size:15.5px;font-weight:400;-webkit-text-stroke:0.6px #fff;color:#fff;letter-spacing:-0.087px;">View Form</div>
<svg class="abs" style="left:1109px;top:240px" width="16" height="14" viewBox="0 0 16 14"><circle cx="9.600" cy="3.600" r="3" fill="#fff"/><path d="M3.800 13.200c0-3.200 2.600-5 5.800-5s5.800 1.800 5.800 5z" fill="#fff"/><circle cx="4" cy="5.300" r="2.100" fill="#fff"/><path d="M0.500 12.600c0-2.500 1.300-4 3.500-4.100" fill="none" stroke="#fff" stroke-width="2"/></svg>
<div class="t" style="left:1133.3px;top:247.03px;font-size:15.5px;font-weight:400;-webkit-text-stroke:0.6px #fff;color:#fff;letter-spacing:-0.210px;">Assign Form</div>
<svg class="abs" style="left:1109px;top:279px" width="16" height="16" viewBox="0 0 16 16"><path d="M7.200 2.300H3c-.9 0-1.500.6-1.500 1.500v9c0 .9.6 1.500 1.500 1.500h9c.9 0 1.500-.6 1.500-1.500V9" fill="none" stroke="#c4c7dc" stroke-width="1.5"/><path d="M12.300 1.700l2 2-5.800 5.800-2.600.6.6-2.600z" fill="none" stroke="#c4c7dc" stroke-width="1.3" stroke-linejoin="round"/></svg>
<div class="t" style="left:1133.3px;top:286.33px;font-size:15.5px;font-weight:400;-webkit-text-stroke:0.6px #fff;color:#fff;letter-spacing:-0.173px;">Edit Form</div>
<svg class="abs" style="left:1110px;top:319px" width="16" height="16" viewBox="0 0 16 16"><path d="M4.200 1h5.500M1 2.800h12" stroke="#fff" stroke-width="1.600" fill="none"/><path d="M2.300 4.300h9.400l-.3 3.200A4.600 4.600 0 0 0 7.700 15H3z" fill="#fff"/><circle cx="11.300" cy="11.300" r="3.600" fill="#fff"/><circle cx="11.300" cy="11.300" r="2.400" fill="#262c5a"/><path d="M11.300 9.800v1.700l1 .6" stroke="#fff" stroke-width=".9" fill="none"/></svg>
<div class="t" style="left:1133.3px;top:326.63px;font-size:15.5px;font-weight:400;-webkit-text-stroke:0.6px #fff;color:#fff;letter-spacing:-0.009px;">Auto-Delete Submission</div>
<div class="abs" style="left:1304px;top:319.5px;width:61px;height:15.5px;border-radius:3px;background:#6a6fa6"></div>
<div class="t" style="left:1310.5px;top:327.04px;font-size:10.0px;font-weight:700;color:#eef0fa;letter-spacing:-0.404px;">DISABLED</div>
<div class="abs" style="left:1228px;top:52px;width:6px;height:52px;background:#ff6100"></div>
<svg class="abs" style="left:1219px;top:100px" width="24" height="37" viewBox="0 0 24 37"><path d="M0 0.5L12 8 24 0.5 12 36z" fill="#ff6100"/></svg>
</body></html>
